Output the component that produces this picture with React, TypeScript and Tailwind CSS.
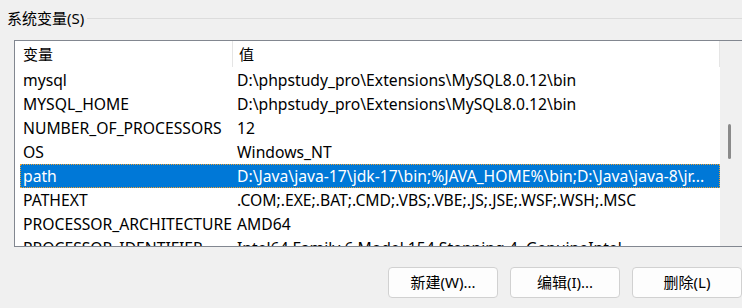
const rows = [
  { name: "mysql", value: "D:\\phpstudy_pro\\Extensions\\MySQL8.0.12\\bin" },
  { name: "MYSQL_HOME", value: "D:\\phpstudy_pro\\Extensions\\MySQL8.0.12\\bin" },
  { name: "NUMBER_OF_PROCESSORS", value: "12" },
  { name: "OS", value: "Windows_NT" },
  { name: "path", value: "D:\\Java\\java-17\\jdk-17\\bin;%JAVA_HOME%\\bin;D:\\Java\\java-8\\jr...", selected: true },
  { name: "PATHEXT", value: ".COM;.EXE;.BAT;.CMD;.VBS;.VBE;.JS;.JSE;.WSF;.WSH;.MSC" },
  { name: "PROCESSOR_ARCHITECTURE", value: "AMD64" },
  { name: "PROCESSOR_IDENTIFIER", value: "Intel64 Family 6 Model 154 Stepping 4, GenuineIntel" },
]

const buttons = ["新建(W)...", "编辑(I)...", "删除(L)"]

export default function App() {
  return (
    <div
      className="w-[742px] h-[308px] bg-[#f0f0f0] overflow-hidden text-[15px] text-black"
      style={{ fontFamily: '"Noto Sans", "Noto Sans CJK SC", sans-serif' }}
    >
      {/* group title */}
      <div className="flex items-center h-[36px] pl-[7px]">
        <span className="leading-none">系统变量(S)</span>
        <div className="flex-1 h-px bg-[#dcdcdc] ml-[3px]" />
      </div>

      {/* list view */}
      <div className="ml-[14px] mt-[4px] h-[207px] border border-r-0 border-[#828790] bg-white flex overflow-hidden">
        <div className="w-[705px] flex flex-col">
          <div className="h-[27px] flex shrink-0">
            <div className="w-[217px] pl-[8px] flex items-center">变量</div>
            <div className="w-px h-[26px] bg-[#e5e5e5]" />
            <div className="flex-1 pl-[6px] flex items-center">值</div>
            <div className="w-px h-[26px] bg-[#e5e5e5]" />
          </div>
          {rows.map((r) => (
            <div key={r.name} className="h-[24px] shrink-0 pl-[5px] text-[15.7px]">
              <div
                className={
                  r.selected
                    ? "h-full flex items-center pt-[2px] bg-[#0078d7] text-white border border-dotted border-[#f0a030]"
                    : "h-full flex items-center pt-[2px] border border-transparent"
                }
              >
                <div className="w-[215px] pl-[2px] whitespace-nowrap">{r.name}</div>
                <div className="flex-1 pl-[1px] whitespace-nowrap overflow-hidden">{r.value}</div>
              </div>
            </div>
          ))}
        </div>
        <div className="flex-1 bg-[#f0f0f0] relative">
          <div className="absolute left-[8px] top-[83px] w-[3px] h-[35px] rounded-full bg-[#8a8a8a]" />
        </div>
      </div>

      {/* buttons */}
      <div className="flex justify-end gap-[12px] mt-[20px]">
        {buttons.map((b) => (
          <button
            key={b}
            className="w-[110px] h-[31px] rounded-[4px] border border-[#d1d1d1] bg-[#fdfdfd] text-[15px] flex items-center justify-center"
          >
            {b}
          </button>
        ))}
      </div>
    </div>
  )
}
